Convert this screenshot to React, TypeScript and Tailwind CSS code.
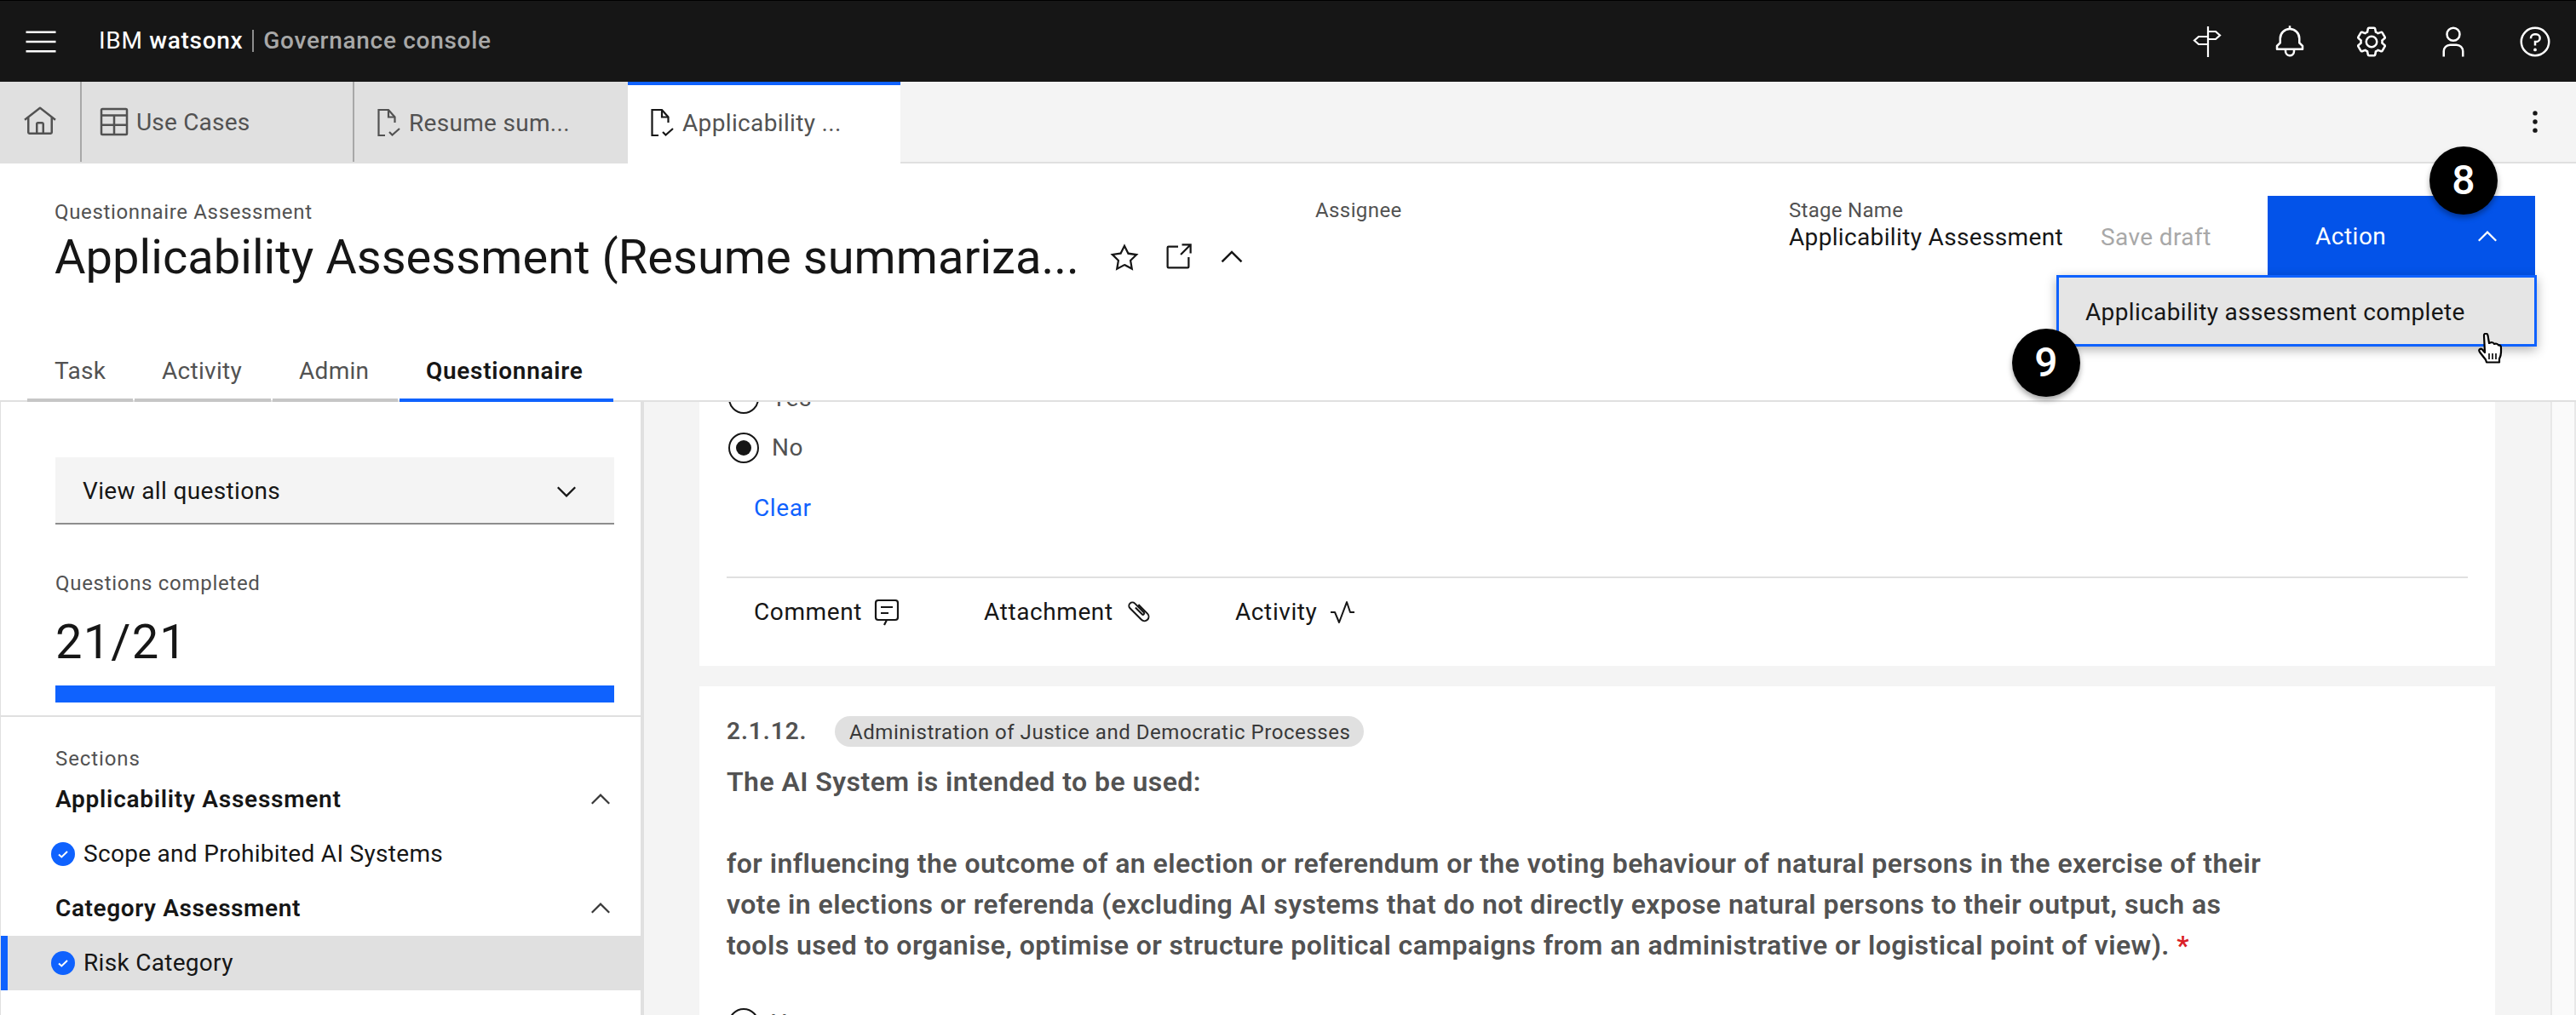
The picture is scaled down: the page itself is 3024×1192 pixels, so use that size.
import React from "react";

const Carbon = ({ d, className = "", children }: { d?: string; className?: string; children?: React.ReactNode }) => (
  <svg viewBox="0 0 32 32" fill="currentColor" className={className}>
    {d && <path d={d} />}
    {children}
  </svg>
);

const chevUp = "M16 9 27 20 25.4 21.6 16 12.2 6.6 21.6 5 20z";
const chevDown = "M16 23 5 12 6.6 10.4 16 19.8 25.4 10.4 27 12z";

const DocCheck = ({ className = "" }: { className?: string }) => (
  <svg viewBox="0 0 36 36" fill="none" stroke="currentColor" strokeWidth="2.2" className={className}>
    <path d="M14 33H6.5V3H18l7.5 8.5V18" />
    <path d="M18 3v8.5h7.5" />
    <path d="M19 29l3.5 3.5L31 25" />
  </svg>
);

const CheckDot = () => (
  <span className="w-7 h-7 rounded-full bg-[#0f62fe] flex items-center justify-center shrink-0">
    <svg viewBox="0 0 16 16" fill="none" stroke="white" strokeWidth="2" className="w-4 h-4">
      <path d="M3 8.5l3.3 3L13 5" />
    </svg>
  </span>
);

const Radio = ({ on = false }: { on?: boolean }) => (
  <span className="w-9 h-9 rounded-full border-2 border-[#161616] flex items-center justify-center shrink-0">
    {on && <span className="w-[18px] h-[18px] rounded-full bg-[#161616]" />}
  </span>
);

const Badge = ({ n, className }: { n: string; className: string }) => (
  <div className={`absolute w-20 h-20 rounded-full bg-black text-white flex items-center justify-center text-[48px] leading-none font-medium shadow-[0_4px_6px_rgba(0,0,0,0.35)] ${className}`}>
    {n}
  </div>
);

const tabCls = "flex items-center gap-[6px] h-full border-r-2 border-[#a8a8a8] bg-[#e0e0e0] text-[#525252] text-[28px] tracking-[0.2px]";

function TopBar() {
  return (
    <header className="h-24 bg-[#161616] border-t border-black flex items-center text-white">
      <div className="w-24 flex justify-center">
        <svg viewBox="0 0 32 32" fill="currentColor" className="w-10 h-10">
          <rect x="2" y="6" width="28" height="2" /><rect x="2" y="15" width="28" height="2" /><rect x="2" y="24" width="28" height="2" />
        </svg>
      </div>
      <div className="ml-[20px] text-[28px] tracking-[0.7px] flex items-center -mt-[2px]">
        <span>IBM&nbsp;</span>
        <span className="font-medium">watsonx</span>
        <span className="mx-[11px] w-[2px] h-[26px] bg-[#8d8d8d]" />
        <span className="text-[#a8a8a8] font-medium">Governance console</span>
      </div>
      <div className="ml-auto flex items-center">
        <div className="w-24 flex justify-center">
          <svg viewBox="0 0 36 36" fill="none" stroke="currentColor" strokeWidth="2.2" className="w-9 h-9">
            <path d="M18 0v36" />
            <path d="M18 6h9l5 4.500-5 4.500H18" />
            <path d="M18 12H7l-5 4.500 5 4.500h11" />
          </svg>
        </div>
        <div className="w-24 flex justify-center">
          <Carbon className="w-10 h-10" d="M28.7071,19.293,26,16.5859V13a10.0136,10.0136,0,0,0-9-9.9492V1H15V3.0508A10.0136,10.0136,0,0,0,6,13v3.5859L3.2929,19.293A1,1,0,0,0,3,20v3a1,1,0,0,0,1,1h7v.7768a5.152,5.152,0,0,0,4.5,5.1987A5.0057,5.0057,0,0,0,21,25V24h7a1,1,0,0,0,1-1V20A1,1,0,0,0,28.7071,19.293ZM19,25a3,3,0,0,1-6,0V24h6Zm8-3H5V20.4141L7.707,17.707A1,1,0,0,0,8,17V13a8,8,0,0,1,16,0v4a1,1,0,0,0,.293.707L27,20.4141Z" />
        </div>
        <div className="w-24 flex justify-center">
          <Carbon className="w-10 h-10">
            <path d="M27,16.76c0-.25,0-.5,0-.76s0-.51,0-.77l1.92-1.68A2,2,0,0,0,29.3,11L26.94,7a2,2,0,0,0-1.73-1,2,2,0,0,0-.64.1l-2.43.82a11.35,11.35,0,0,0-1.31-.75l-.51-2.52a2,2,0,0,0-2-1.61H13.64a2,2,0,0,0-2,1.61l-.51,2.52a11.48,11.48,0,0,0-1.32.75L7.43,6.06A2,2,0,0,0,6.79,6,2,2,0,0,0,5.06,7L2.7,11a2,2,0,0,0,.41,2.51L5,15.24c0,.25,0,.5,0,.76s0,.51,0,.77L3.11,18.45A2,2,0,0,0,2.7,21L5.06,25a2,2,0,0,0,1.73,1,2,2,0,0,0,.64-.1l2.43-.82a11.35,11.35,0,0,0,1.31.75l.51,2.52a2,2,0,0,0,2,1.61h4.72a2,2,0,0,0,2-1.61l.51-2.52a11.48,11.48,0,0,0,1.32-.75l2.42.82a2,2,0,0,0,.64.1,2,2,0,0,0,1.73-1L29.3,21a2,2,0,0,0-.41-2.51ZM25.21,24l-3.43-1.16a8.86,8.86,0,0,1-2.71,1.57L18.36,28H13.64l-.71-3.55a9.36,9.36,0,0,1-2.7-1.57L6.79,24,4.43,20l2.72-2.4a8.9,8.9,0,0,1,0-3.13L4.43,12,6.79,8l3.43,1.16a8.86,8.86,0,0,1,2.71-1.57L13.64,4h4.72l.71,3.55a9.36,9.36,0,0,1,2.7,1.57L25.21,8,27.57,12l-2.72,2.4a8.9,8.9,0,0,1,0,3.13L27.57,20Z" />
            <path d="M16,22a6,6,0,1,1,6-6A5.94,5.94,0,0,1,16,22Zm0-10a3.91,3.91,0,0,0-4,4,3.91,3.91,0,0,0,4,4,3.91,3.91,0,0,0,4-4A3.91,3.91,0,0,0,16,12Z" />
          </Carbon>
        </div>
        <div className="w-24 flex justify-center">
          <Carbon className="w-10 h-10">
            <path d="M16,4a5,5,0,1,1-5,5,5,5,0,0,1,5-5m0-2a7,7,0,1,0,7,7A7,7,0,0,0,16,2Z" />
            <path d="M26,30H24V25a5,5,0,0,0-5-5H13a5,5,0,0,0-5,5v5H6V25a7,7,0,0,1,7-7h6a7,7,0,0,1,7,7Z" />
          </Carbon>
        </div>
        <div className="w-24 flex justify-center">
          <Carbon className="w-10 h-10">
            <path d="M16,2A14,14,0,1,0,30,16,14,14,0,0,0,16,2Zm0,26A12,12,0,1,1,28,16,12,12,0,0,1,16,28Z" />
            <circle cx="16" cy="23.5" r="1.5" />
            <path d="M17,8H15.5A4.49,4.49,0,0,0,11,12.5V13h2v-.5A2.5,2.5,0,0,1,15.5,10H17a2.500,2.500,0,0,1,0,5H15v4.500h2V17a4.500,4.500,0,0,0,0-9Z" />
          </Carbon>
        </div>
      </div>
    </header>
  );
}

function TabBar() {
  return (
    <div className="h-24 bg-[#f4f4f4] border-b-2 border-[#e0e0e0] flex">
      <div className={`${tabCls} w-[96px] justify-center h-[96px]`}>
        <Carbon className="w-10 h-10" d="M16.6123,2.2138a1.01,1.01,0,0,0-1.2427,0L1,13.4194l1.2427,1.5717L4,13.6209V26a2.0041,2.0041,0,0,0,2,2H26a2.0037,2.0037,0,0,0,2-2V13.63L29.7573,15,31,13.4282ZM18,26H14V18h4Zm2,0V18a2.0023,2.0023,0,0,0-2-2H14a2.002,2.002,0,0,0-2,2v8H6V12.0615l10-7.79,10,7.8005V26Z" />
      </div>
      <div className={`${tabCls} w-[320px] pl-[18px] h-[96px]`}>
        <Carbon className="w-10 h-10" d="M27,3H5A2,2,0,0,0,3,5V27a2,2,0,0,0,2,2H27a2,2,0,0,0,2-2V5A2,2,0,0,0,27,3Zm0,2V9H5V5ZM17,11H27v7H17Zm-2,7H5V11H15ZM5,20H15v7H5Zm12,7V20H27v7Z" />
        <span className="mt-[2px]">Use Cases</span>
      </div>
      <div className="flex items-center gap-[6px] w-[321px] h-[96px] pl-[22px] bg-[#e0e0e0] text-[#525252] text-[28px] tracking-[0.3px]">
        <DocCheck className="w-9 h-9" />
        <span className="mt-[2px]">Resume sum...</span>
      </div>
      <div className="flex items-center gap-[6px] w-[320px] h-[96px] pl-[22px] bg-white border-t-4 border-[#0f62fe] text-[#525252] text-[28px] tracking-[0.35px]">
        <DocCheck className="w-9 h-9 text-[#161616] -mt-1" />
        <span className="-mt-[2px]">Applicability ...</span>
      </div>
      <div className="ml-auto w-24 flex items-center justify-center text-[#161616]">
        <svg viewBox="0 0 32 32" fill="currentColor" className="w-9 h-9">
          <circle cx="16" cy="7" r="2.400" /><circle cx="16" cy="16" r="2.400" /><circle cx="16" cy="25" r="2.400" />
        </svg>
      </div>
    </div>
  );
}

function PageHeader() {
  return (
    <div className="h-[280px] flex flex-col justify-between border-b-2 border-[#e0e0e0] bg-white relative">
      <div className="flex pt-[38px]">
        <div className="w-[1544px] pl-[64px] shrink-0">
          <div className="text-[24px] leading-[38px] text-[#525252] tracking-[0.65px]">Questionnaire Assessment</div>
          <div className="flex items-center h-[68px]">
            <div className="text-[56px] leading-[68px] text-[#161616] tracking-[0.05px] w-[1238px] whitespace-nowrap">Applicability Assessment (Resume summariza...</div>
            <div className="flex items-center gap-[27px] text-[#161616]">
              <Carbon className="w-9 h-9" d="M16,6.52l2.76,5.58.46,1,1,.15,6.16.89L22,18.44l-.75.73.18,1,1.05,6.13-5.51-2.89L16,23l-.93.49L9.56,26.34l1-6.13.18-1L10,18.43,5.58,14.09l6.16-.89,1-.15.46-1L16,6.52M16,2l-4.55,9.22L1.28,12.69l7.36,7.18L6.9,30,16,25.22,25.1,30,23.36,19.87l7.36-7.17L20.55,11.22Z" />
              <Carbon className="w-9 h-9">
                <path d="M26,28H6a2.0027,2.0027,0,0,1-2-2V6A2.0027,2.0027,0,0,1,6,4H16V6H6V26H26V16h2V26A2.0027,2.0027,0,0,1,26,28Z" />
                <path d="M20 2 20 4 26.586 4 18 12.586 19.414 14 28 5.414 28 12 30 12 30 2 20 2z" />
              </Carbon>
              <Carbon className="w-9 h-9" d={chevUp} />
            </div>
          </div>
        </div>
        <div className="text-[24px] leading-[34px] text-[#525252] tracking-[0.4px]">Assignee</div>
        <div className="ml-auto flex items-start">
          <div>
            <div className="text-[24px] leading-[34px] text-[#525252] tracking-[0.3px]">Stage Name</div>
            <div className="text-[28px] leading-[30px] text-[#161616] tracking-[0.35px]">Applicability Assessment</div>
          </div>
          <div className="ml-[44px] mt-[34px] w-[196px] text-[28px] leading-[30px] text-[#a8a8a8] tracking-[0.4px]">Save draft</div>
          <div className="w-[314px] h-[96px] bg-[#0353e9] text-white mr-[48px] flex items-center pl-[56px] text-[28px] tracking-[0.5px]">
            <span>Action</span>
            <Carbon className="w-8 h-8 ml-auto mr-[40px]" d={chevUp} />
          </div>
        </div>
      </div>
      <div className="flex pl-[32px] text-[28px] leading-[40px] -mb-[2px] tracking-[0.3px] text-[#525252]">
        <div className="w-[124px] pl-[32px] pb-[12px] border-b-4 border-[#c6c6c6] mr-[2px]">Task</div>
        <div className="w-[160px] pl-[32px] pb-[12px] border-b-4 border-[#c6c6c6] mr-[2px]">Activity</div>
        <div className="w-[147px] pl-[31px] pb-[12px] border-b-4 border-[#c6c6c6] mr-[2px]">Admin</div>
        <div className="w-[251px] pl-[31px] pb-[12px] border-b-4 border-[#0f62fe] font-semibold text-[#161616] tracking-[0.7px]">Questionnaire</div>
      </div>
    </div>
  );
}

function Sidebar() {
  return (
    <aside className="w-[756px] shrink-0 bg-white border-l border-[#e0e0e0] border-r-[4px] h-full overflow-hidden">
      <div className="pl-[64px] pr-[31px] pt-[65px]">
        <div className="h-[79px] bg-[#f4f4f4] border-b-2 border-[#8d8d8d] flex items-center pl-[32px] pr-[40px] pt-[3px] text-[28px] tracking-[0.35px] text-[#161616]">
          <span>View all questions</span>
          <Carbon className="w-8 h-8 ml-auto" d={chevDown} />
        </div>
        <div className="mt-[50px] text-[24px] leading-[38px] text-[#525252] tracking-[0.7px]">Questions completed</div>
        <div className="mt-[14px] text-[56px] leading-[72px] text-[#161616] tracking-[1.200px]">21/21</div>
        <div className="mt-[15px] h-5 bg-[#0f62fe]" />
      </div>
      <div className="mt-[15px] border-t-2 border-[#e0e0e0]">
        <div className="pl-[64px] pr-[30px] pt-[31px]">
          <div className="text-[24px] leading-[36px] text-[#525252] tracking-[0.9px]">Sections</div>
          <div className="mt-[6px] flex items-center justify-between h-[48px] text-[28px] font-semibold tracking-[0.75px] text-[#161616]">
            <span>Applicability Assessment</span>
            <Carbon className="w-8 h-8 mr-[1px] text-[#393939]" d={chevUp} />
          </div>
        </div>
        <div className="h-[64px] mt-[8px] pl-[59px] flex items-center gap-[10px] text-[28px] tracking-[0.3px] text-[#161616]">
          <CheckDot /><span>Scope and Prohibited AI Systems</span>
        </div>
        <div className="pl-[64px] pr-[30px] flex items-center justify-between h-[64px] text-[28px] font-semibold tracking-[0.6px] text-[#161616]">
          <span>Category Assessment</span>
          <Carbon className="w-8 h-8 mr-[1px] text-[#393939]" d={chevUp} />
        </div>
        <div className="h-[64px] bg-[#e0e0e0] border-l-[8px] border-[#0f62fe] pl-[51px] flex items-center gap-[10px] text-[28px] tracking-[0.3px] text-[#161616]">
          <CheckDot /><span>Risk Category</span>
        </div>
      </div>
    </aside>
  );
}

function Main() {
  return (
    <main className="flex-1 flex h-full overflow-hidden bg-[#f4f4f4]">
      <div className="w-[2173px] shrink-0 pl-[65px] text-[#525252]">
        <div className="bg-white -mt-[40px] h-[350px] pt-[18px]">
          <div className="pl-[34px] flex items-center gap-[15px] h-9 text-[28px] tracking-[0.6px]"><Radio /><span>Yes</span></div>
          <div className="pl-[34px] mt-[22px] flex items-center gap-[15px] h-9 text-[28px] tracking-[0.6px]"><Radio on /><span>No</span></div>
          <div className="pl-[64px] mt-[35px] h-9 leading-9 text-[28px] text-[#0f62fe] tracking-[0.6px]">Clear</div>
          <div className="mx-[32px] mt-[62px] border-t-2 border-[#e0e0e0] h-[82px] pl-[32px] flex items-center text-[#161616] text-[28px] tracking-[0.6px]">
            <div className="w-[270px] flex items-center gap-[14px]">
              <span>Comment</span>
              <svg viewBox="0 0 30 32" fill="none" stroke="currentColor" strokeWidth="2.200" className="w-[30px] h-[32px]">
                <path d="M12 31l3-6h10a3 3 0 0 0 3-3V5a3 3 0 0 0-3-3H5a3 3 0 0 0-3 3v17a3 3 0 0 0 3 3h10" />
                <path d="M8 10h14M8 17h9" />
              </svg>
            </div>
            <div className="w-[295px] flex items-center gap-[14px]">
              <span>Attachment</span>
              <svg viewBox="0 0 32 32" fill="none" stroke="currentColor" strokeWidth="2" className="w-8 h-8">
                <path d="M19 10V25a5 5 0 0 1-10 0V6a4 4 0 0 1 8 0V21a1.500 1.500 0 0 1-3 0V10" transform="rotate(-45 14 15.500) translate(2 .5)" />
              </svg>
            </div>
            <div className="flex items-center gap-[14px]">
              <span>Activity</span>
              <Carbon className="w-8 h-8" d="M12,29a1,1,0,0,1-.92-.62L6.33,17H2V15H7a1,1,0,0,1,.92.62L12,25.28,20.06,3.72A1,1,0,0,1,21,3a1,1,0,0,1,.93.68L25.72,15H30v2H25a1,1,0,0,1-.95-.68L21,7,12.94,28.35A1,1,0,0,1,12,29Z" />
            </div>
          </div>
        </div>
        <div className="bg-white mt-[24px] h-[500px] px-[32px] pt-[35px]">
          <div className="flex items-center h-9">
            <span className="text-[28px] font-semibold tracking-[0.95px] w-[127px]">2.1.12.</span>
            <span className="h-9 w-[621px] rounded-full bg-[#e0e0e0] text-[#393939] text-[24px] tracking-[0.55px] pl-[17px] pt-[2px] flex items-center whitespace-nowrap">Administration of Justice and Democratic Processes</span>
          </div>
          <div className="mt-[17px] w-[1820px] text-[32px] leading-[48px] font-semibold tracking-[0.44px]">
            <p>The AI System is intended to be used:</p>
            <p className="h-12" />
            <p>for influencing the outcome of an election or referendum or the voting behaviour of natural persons in the exercise of their</p>
            <p>vote in elections or referenda (excluding AI systems that do not directly expose natural persons to their output, such as</p>
            <p>tools used to organise, optimise or structure political campaigns from an administrative or logistical point of view). <span className="text-[#da1e28]">*</span></p>
          </div>
          <div className="mt-[50px] pl-[2px] flex items-center gap-[15px] h-9 text-[28px] tracking-[0.6px]"><Radio /><span>Yes</span></div>
        </div>
      </div>
      <div className="ml-auto w-[30px] h-full bg-[#fafafa] border-l-2 border-r-2 border-[#e8e8e8]" />
    </main>
  );
}

export default function App() {
  return (
    <div className="relative w-[3024px] h-[1192px] overflow-hidden bg-white font-[Roboto,sans-serif]">
      <TopBar />
      <TabBar />
      <PageHeader />
      <div className="flex h-[720px]">
        <Sidebar />
        <Main />
      </div>

      <div className="absolute left-[2414px] top-[323px] w-[564px] h-[84px] border-[3px] border-[#0f62fe] bg-[#e5e5e5] shadow-[0_4px_12px_rgba(0,0,0,0.3)] flex items-center pl-[31px] pt-[3px] text-[28px] tracking-[0.35px] text-[#161616]">
        Applicability assessment complete
      </div>
      <Badge n="8" className="left-[2852px] top-[172px]" />
      <Badge n="9" className="left-[2362px] top-[386px]" />
      <svg viewBox="0 0 30 40" className="absolute left-[2908px] top-[391px] w-[30px] h-[40px]">
        <path d="M8 3c0-3 4-3 4.500 0l1.500 9 3-1c2 0 2.500 1 3 2l2-.5c2 0 2.500 1 3 2 2-.5 3 .5 3 3v5c0 4-1 6-2 8v4H11l-1-3-7-9c-2-3 1-5 3-3l3 3.500z" fill="white" stroke="black" strokeWidth="2.200" strokeLinejoin="round" />
        <path d="M14 24v7M18 24v7M22 24v7" stroke="black" strokeWidth="1.600" />
      </svg>
    </div>
  );
}
